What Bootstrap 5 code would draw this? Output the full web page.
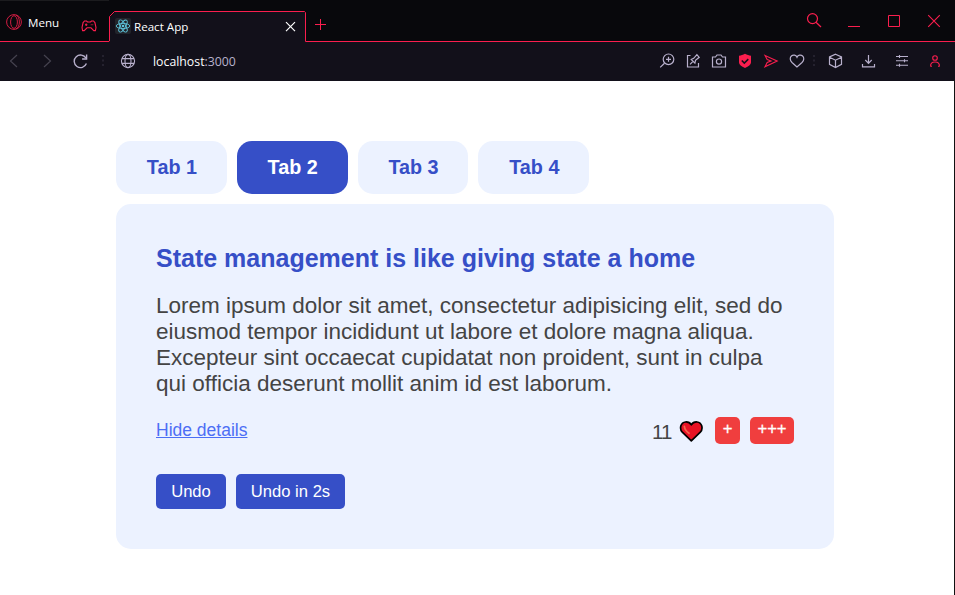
<!DOCTYPE html>
<html lang="en">
<head>
<meta charset="utf-8">
<title>React App</title>
<link href="https://cdn.jsdelivr.net/npm/bootstrap@5.3.0/dist/css/bootstrap.min.css" rel="stylesheet">
<style>
body { font-family: "Liberation Sans", Arial, sans-serif; background: #fff; height: 595px; overflow: hidden; }
svg { display: block; flex: none; fill: none; stroke: currentColor; }
.chrome { font-family: "Open Sans", "Segoe UI", sans-serif; font-size: 11.6px; line-height: 16px; color: #fff; background: #12101a; height: 81px; }
.title-bar { height: 42px; background: #08080c; }
.title-bar > div { height: 42px; }
.edge { border-bottom: 1px solid #fa1e4e; }
.red { color: #fa1e4e; }
.opera { color: #d01c42; }
.react-blue { color: #5ec5dd; }
.menu-area { width: 109px; padding: 13px 12px 0 6px; border-top: 1px solid #1b1b1e; }
.menu-word { margin: 1px 21px 0 6px; width: 32px; }
.pad-icon { margin-top: 4px; }
.browser-tab { width: 197px; padding: 18px 8px 0 6px; }
.browser-tab .outline { left: 0; top: 0; }
.tab-name { margin: 1px 0 0 3px; }
.window-side { padding: 0 13px 0 8px; }
.window-buttons { gap: 24px; padding-top: 13px; }
.toolbar { height: 39px; padding: 0 12px 2px 6px; }
.tools { color: #b8b0cc; }
.dim { color: #45424f; }
.dots { color: #2c2937; }
.address { font-size: 12.3px; margin: 3px 0 0 17px; }
.set-a { gap: 10px; }
.set-b { gap: 17px; }
.viewport { height: 514px; border-right: 1px solid #111; padding: 60px 0 0 116px; }
.tab-row { gap: 10px; }
.tab-pill { width: 110.8px; height: 53px; border-radius: 15px; background: #ecf2ff; color: #364fc7; font-weight: 700; font-size: 19.8px; line-height: 51px; border: 0; padding: 0 0 0 1px; }
.tab-pill.active { background: #364fc7; color: #fff; }
.panel { width: 718px; height: 345px; margin-top: 10px; padding: 40px; border-radius: 15px; background: #ecf2ff; color: #444; }
.panel h4 { font-size: 25px; line-height: 28px; font-weight: 700; color: #364fc7; margin: 0 0 21px; }
.panel p { font-size: 22.5px; line-height: 26px; margin: 0; white-space: nowrap; }
.actions { height: 27px; margin-top: 20px; }
.link-button { font-size: 17.5px; line-height: 20px; color: #4c6ef5; text-decoration: underline; border: 0; background: none; padding: 0; margin-top: -1px; }
.counter { font-size: 20.5px; line-height: 24px; margin-top: 2px; width: 27px; letter-spacing: -.8px; }
.heart-icon { margin-right: 1px; }
.hearts { gap: 10px; }
.like { height: 27px; border: 0; border-radius: 5px; padding: 0 0 3px; background: #f03e3e; color: #fff; font-size: 16.6px; line-height: 24px; -webkit-text-stroke: .3px #fff; }
.like-one { width: 25px; }
.like-many { width: 44px; }
.undo-row { margin-top: 30px; gap: 10px; }
.undo { height: 35px; border: 0; border-radius: 5px; padding: 1px 0 0; background: #364fc7; color: #fff; font-size: 16.6px; line-height: 34px; }
.undo-now { width: 70px; }
.undo-later { width: 109px; }
</style>
<script src="https://cdn.jsdelivr.net/npm/bootstrap@5.3.0/dist/js/bootstrap.bundle.min.js"></script>
</head>
<body>
<header class="chrome">
  <div class="title-bar d-flex">
    <div class="menu-area edge d-flex align-items-start">
      <svg class="opera" width="16" height="16" viewBox="0 0 16 16" stroke-width="1"><circle cx="8" cy="8" r="7.4"/><ellipse cx="8" cy="8" rx="3.4" ry="6.3"/><path d="M10 1.2c4.5 1.5 4.5 12 0 13.6"/></svg>
      <span class="menu-word">Menu</span>
      <svg class="red pad-icon" width="16" height="16" viewBox="0 0 16 16" stroke-width="1.1"><path d="M3.500 3h2l1 1h3l1-1h2l1.400 1.600 1.100 5-.6 3h-1.600L10 9.800H6l-2.800 2.800H1.600L1 9.600l1.100-5z"/><path d="M4 6.700h2.400M5.200 5.500v2.400M9.800 6.700h.8M11.400 6.700h.8"/></svg>
    </div>
    <div class="browser-tab position-relative d-flex align-items-start">
      <svg class="outline red position-absolute" width="197" height="42" viewBox="0 0 197 42"><path fill="#12101a" stroke="none" d="M1 42V17l5-5h190v30z"/><path d="M0 41.500L.5 41V16.500l5-5H195.500l1 1V41.500H197"/></svg>
      <svg class="position-relative react-blue" width="16" height="16" viewBox="0 0 16 16" stroke-width=".9"><rect width="16" height="16" rx="2" fill="#22242a" stroke="none"/><ellipse cx="8" cy="8" rx="6.800" ry="2.600"/><ellipse cx="8" cy="8" rx="6.800" ry="2.600" transform="rotate(60 8 8)"/><ellipse cx="8" cy="8" rx="6.800" ry="2.600" transform="rotate(120 8 8)"/><circle cx="8" cy="8" r="1.300" fill="#5ec5dd" stroke="none"/></svg>
      <span class="tab-name position-relative">React App</span>
      <svg class="position-relative ms-auto" width="16" height="16" viewBox="0 0 16 16" stroke-width="1.200"><path d="M4 4.200l9 9M13 4.200l-9 9"/></svg>
    </div>
    <div class="window-side edge red flex-grow-1 d-flex justify-content-between align-items-start">
      <svg width="13" height="41" viewBox="0 0 13 41"><path d="M1 24.500h11M6.500 19v11"/></svg>
      <div class="window-buttons d-flex">
        <svg width="16" height="16" viewBox="0 0 16 16" stroke-width="1.200"><circle cx="6.500" cy="5.600" r="5"/><path d="M10 9.200l5 4.800"/></svg>
        <svg width="16" height="16" viewBox="0 0 16 16"><path d="M2 13.500h12"/></svg>
        <svg width="16" height="16" viewBox="0 0 16 16"><path d="M2.500 2.500h11v11h-11z"/></svg>
        <svg width="16" height="16" viewBox="0 0 16 16" stroke-width="1.100"><path d="M2.200 2.200l11.600 11.600M13.800 2.200L2.200 13.800"/></svg>
      </div>
    </div>
  </div>
  <div class="toolbar d-flex align-items-center tools">
    <svg class="dim" width="16" height="16" viewBox="0 0 16 16" stroke-width="1.200"><path d="M11 2L4.500 8l6.500 6"/></svg>
    <svg class="dim ms-3" width="17" height="16" viewBox="0 0 17 16" stroke-width="1.200"><path d="M6 2l6.500 6L6 14"/></svg>
    <svg class="ms-3" width="18" height="16" viewBox="0 0 18 16" stroke-width="1.400"><path d="M15 5.200A6.300 6.300 0 1 0 15.400 10.600"/><path d="M15.600 1.500V6h-4.500"/></svg>
    <svg class="dots" width="31" height="16" viewBox="0 0 31 16"><path stroke-width="1.500" stroke-dasharray="2 2.500" d="M14 2v12"/></svg>
    <svg width="16" height="16" viewBox="0 0 16 16" stroke-width="1.100"><circle cx="8" cy="8" r="6.600"/><ellipse cx="8" cy="8" rx="3" ry="6.600"/><path d="M2 5.600h12M2 10.400h12"/></svg>
    <span class="address"><span class="text-white">localhost</span>:3000</span>
    <div class="set-a d-flex align-items-center ms-auto">
      <svg width="16" height="16" viewBox="0 0 16 16" stroke-width="1.200"><circle cx="9.500" cy="6.300" r="5.300"/><path d="M5.500 10.200L1.200 14.400M7 6.300h5M9.500 3.800v5"/></svg>
      <svg width="16" height="16" viewBox="0 0 16 16" stroke-width="1.200"><path d="M5.500 2.500h-3v11.500h11v-4M5 11.300l3-3M6.300 6.500l3.600 3.600.6-2.800 3.700-3-2.300-2.700-3.200 3.700z"/></svg>
      <svg width="16" height="16" viewBox="0 0 16 16" stroke-width="1.200"><path d="M1.500 4h3l1.500-2h4l1.500 2h3v10h-13z"/><circle cx="8" cy="8.600" r="2.600"/></svg>
      <svg width="16" height="16" viewBox="0 0 16 16" stroke-width="1.500"><path fill="#fa1e4e" stroke="none" d="M8 .8c2 1.200 4 1.700 6 1.900v6.800c0 2.200-2.500 4-6 5.500-3.500-1.500-6-3.300-6-5.500V2.700C4 2.500 6 2 8 .8z"/><path stroke="#12101a" d="M4.800 7.500l2.500 2.600 4-4"/></svg>
      <svg class="red" width="16" height="16" viewBox="0 0 16 16" stroke-width="1.100"><path d="M2 2.400L14.200 8 2 13.800l2.200-4.300L8 8 4.200 6.600z"/></svg>
      <svg width="16" height="16" viewBox="0 0 16 16" stroke-width="1.200"><path d="M8 14L3 9.500C.6 7.200.9 4.300 2.400 3 4.200 1.400 7 2 8 4.300 9 2 11.800 1.400 13.600 3c1.500 1.300 1.800 4.200-.6 6.500z"/></svg>
    </div>
    <svg class="dots" width="23" height="16" viewBox="0 0 23 16"><path stroke-width="1.500" stroke-dasharray="2 2.500" d="M9 2v12"/></svg>
    <div class="set-b d-flex align-items-center">
      <svg width="16" height="16" viewBox="0 0 16 16" stroke-width="1.200"><path d="M7.500 1.200l6 2.700v7.400l-6 3.200-6-3.200V3.900zM1.500 4.200l6 3 6-3M7.500 7.200v7.300"/></svg>
      <svg width="16" height="16" viewBox="0 0 16 16" stroke-width="1.200"><path d="M7.500 2v8M4.300 7l3.200 3.300L10.700 7M1.500 11v2.900h12V11"/></svg>
      <svg width="16" height="16" viewBox="0 0 16 16" stroke-width="1.100"><path d="M2 3.500h12M2 7.800h12M2 12.200h12M5.500 2v3M10.500 6.300v3M5.500 10.700v3"/></svg>
      <svg class="red" width="16" height="16" viewBox="0 0 16 16" stroke-width="1.100"><circle cx="8" cy="5" r="2.300"/><path d="M3.600 13.500c-.2-3 1.200-4.500 4.400-4.500s4.600 1.500 4.400 4.500M3.500 13.300H5M11 13.300h1.500"/></svg>
    </div>
  </div>
</header>
<main class="viewport">
  <div class="tab-row d-flex">
    <button class="tab-pill">Tab 1</button>
    <button class="tab-pill active">Tab 2</button>
    <button class="tab-pill">Tab 3</button>
    <button class="tab-pill">Tab 4</button>
  </div>
  <section class="panel">
    <h4>State management is like giving state a home</h4>
    <p>Lorem ipsum dolor sit amet, consectetur adipisicing elit, sed do<br>eiusmod tempor incididunt ut labore et dolore magna aliqua.<br>Excepteur sint occaecat cupidatat non proident, sunt in culpa<br>qui officia deserunt mollit anim id est laborum.</p>
    <div class="actions d-flex justify-content-between align-items-center">
      <button class="link-button">Hide details</button>
      <div class="hearts d-flex align-items-center">
        <div class="d-flex align-items-center">
          <span class="counter">11</span>
          <svg class="heart-icon" width="25" height="24" viewBox="0 0 25 24"><path d="M12.300 21.900L3.300 13.200C0 9.500 1.800 3.400 6.500 3c2.500-.2 4.500.8 5.800 2.900 1.300-2.100 3.300-3.100 5.800-2.900 4.700.4 6.500 6.500 3.200 10.200z" fill="#e81224" stroke="#000" stroke-width="1.700" stroke-linejoin="round"/><path stroke="#f4664c" d="M5.400 7.500c.3 2.800 2 5 4.600 6.800" stroke-width="1.800" stroke-linecap="round"/></svg>
        </div>
        <button class="like like-one">+</button>
        <button class="like like-many">+++</button>
      </div>
    </div>
    <div class="undo-row d-flex">
      <button class="undo undo-now">Undo</button>
      <button class="undo undo-later">Undo in 2s</button>
    </div>
  </section>
</main>
</body>
</html>
